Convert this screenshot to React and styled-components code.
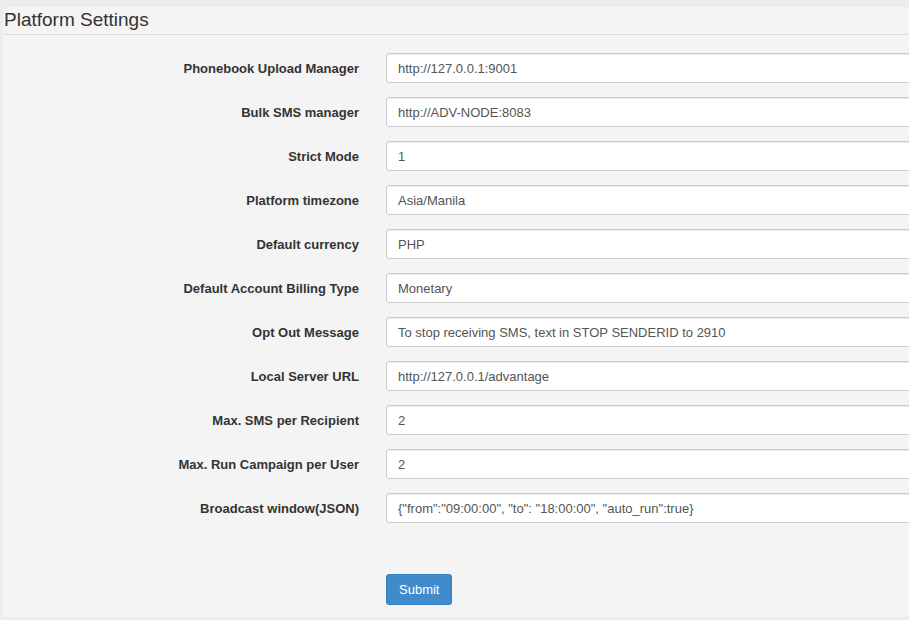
import React from "react";
import styled, { createGlobalStyle } from "styled-components";

const GlobalStyle = createGlobalStyle`
  html, body {
    margin: 0;
    padding: 0;
    background: #ececec;
    overflow: hidden;
    font-family: "Liberation Sans", Arial, sans-serif;
    color: #333;
  }
`;

const Page = styled.div`
  padding: 7px 0 3px 3px;
  height: 620px;
  width: 909px;
  box-sizing: border-box;
  overflow: hidden;
`;

const Panel = styled.div`
  background: #f4f4f4;
  height: 100%;
  width: 1000px;
  box-sizing: border-box;
`;

const Header = styled.h3`
  margin: 0;
  padding: 2px 0 0 1px;
  height: 25px;
  font-size: 19px;
  font-weight: normal;
  line-height: 22px;
  color: #333;
  border-bottom: 1px solid #dcdcdc;
`;

const Form = styled.form`
  padding-top: 18px;
`;

const Row = styled.div`
  display: grid;
  grid-template-columns: 356px 560px;
  column-gap: 27px;
  align-items: center;
  margin-bottom: 14px;
`;

const Label = styled.label`
  text-align: right;
  font-size: 13px;
  font-weight: bold;
  color: #333;
`;

const Input = styled.input`
  height: 30px;
  box-sizing: border-box;
  padding: 6px 11px;
  font-family: inherit;
  font-size: 13px;
  color: #555;
  background: #fff;
  border: 1px solid #ccc;
  border-radius: 3px;
  box-shadow: inset 0 1px 1px rgba(0, 0, 0, 0.075);
  outline: none;
`;

const Actions = styled.div`
  padding: 37px 0 0 383px;
`;

const Button = styled.button`
  height: 31px;
  padding: 6px 12px;
  font-family: inherit;
  font-size: 13px;
  color: #fff;
  background: #428bca;
  border: 1px solid #357ebd;
  border-radius: 3px;
  cursor: pointer;
`;

const fields = [
  ["Phonebook Upload Manager", "http://127.0.0.1:9001"],
  ["Bulk SMS manager", "http://ADV-NODE:8083"],
  ["Strict Mode", "1"],
  ["Platform timezone", "Asia/Manila"],
  ["Default currency", "PHP"],
  ["Default Account Billing Type", "Monetary"],
  ["Opt Out Message", "To stop receiving SMS, text in STOP SENDERID to 2910"],
  ["Local Server URL", "http://127.0.0.1/advantage"],
  ["Max. SMS per Recipient", "2"],
  ["Max. Run Campaign per User", "2"],
  [
    "Broadcast window(JSON)",
    '{"from":"09:00:00", "to": "18:00:00", "auto_run":true}',
  ],
];

function App() {
  return (
    <>
      <GlobalStyle />
      <Page>
        <Panel>
          <Header>Platform Settings</Header>
          <Form onSubmit={(e) => e.preventDefault()}>
            {fields.map(([label, value]) => (
              <Row key={label}>
                <Label>{label}</Label>
                <Input defaultValue={value} />
              </Row>
            ))}
            <Actions>
              <Button type="submit">Submit</Button>
            </Actions>
          </Form>
        </Panel>
      </Page>
    </>
  );
}

export default App;
